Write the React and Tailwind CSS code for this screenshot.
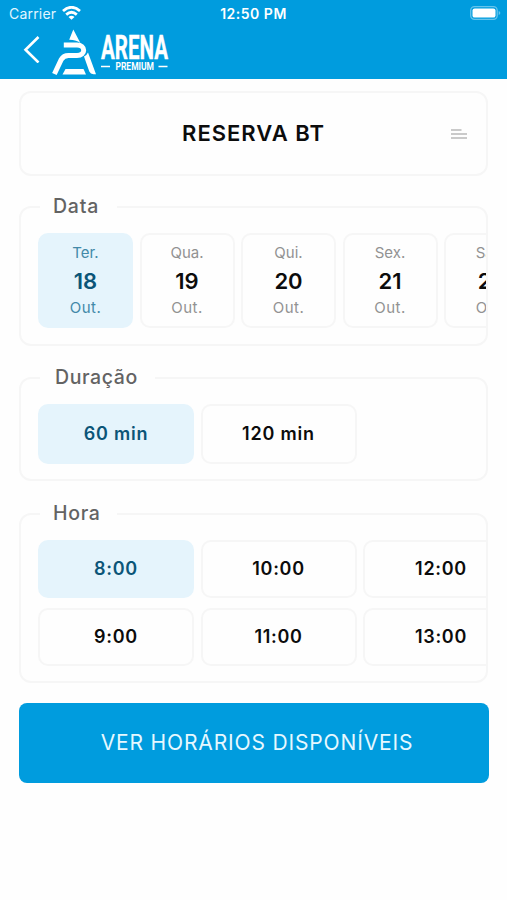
const DAYS = [
  ["Ter.", "18"],
  ["Qua.", "19"],
  ["Qui.", "20"],
  ["Sex.", "21"],
  ["Sáb.", "22"],
];
const HOURS = [
  ["8:00", "9:00"],
  ["10:00", "11:00"],
  ["12:00", "13:00"],
];

function Section({ title, legendClass, className, children }) {
  return (
    <fieldset className={`mx-[19px] min-w-0 rounded-[12px] border-2 border-[#f6f6f6] ${className}`}>
      <legend className={`ml-[19px] h-[22px] text-[19.5px] leading-[20px] font-medium text-[#636363] ${legendClass}`}>
        {title}
      </legend>
      <div className="overflow-hidden pt-[15px] pl-[17px]">{children}</div>
    </fieldset>
  );
}

function Tile({ selected, className, children }) {
  return (
    <div
      className={`flex shrink-0 flex-col items-center justify-center rounded-[10px] border-2 ${
        selected ? "border-[#e5f4fc] bg-[#e5f4fc] text-[#0b5578]" : "border-[#f6f6f6] bg-[#fefefe] text-[#0c0c0c]"
      } ${className}`}
    >
      {children}
    </div>
  );
}

function Logo() {
  return (
    <svg width="120" height="50" viewBox="0 0 120 50" fill="none" className="ml-[11px]">
      <g fill="#fff">
        <path d="M22.3 1.5 L29.5 15.2 Q26 12.2 18.2 11.8 Z" />
        <path d="M33 28.5 Q36 27 37 24.5 L45 46.3 H42.5 Q39.5 46 38.3 43.5 Z" />
        <path d="M14.5 41 H32.5 L35 46.5 H11.5 Z" />
      </g>
      <path d="M12.8 17 H26 C34.8 17 35 27.5 26 27.5 H17.5 Q12.5 27.5 10.3 31.5 L3.4 46" stroke="#fff" strokeWidth="5" />
      <text x="50" y="31" fill="#fff" stroke="#fff" strokeWidth="0.4" fontSize="33" fontWeight="700" textLength="67" lengthAdjust="spacingAndGlyphs" className="font-['Roboto',sans-serif]">
        ARENA
      </text>
      <text x="64.5" y="42.3" fill="#fff" fontSize="10.5" fontWeight="700" textLength="38.5" lengthAdjust="spacingAndGlyphs" className="font-['Roboto',sans-serif]">
        PREMIUM
      </text>
      <path d="M50 38.5 H59 M107.5 38.5 H116.5" stroke="#fff" strokeWidth="1.3" />
    </svg>
  );
}

export default function App() {
  return (
    <div className="h-[900px] w-[507px] overflow-hidden bg-[#fefefe] font-['Inter',sans-serif]">
      <header className="h-[79px] bg-[#009cde] text-white">
        <div className="grid h-[28px] grid-cols-[1fr_auto_1fr] items-center pr-[6px] pl-[9px] text-[14px]">
          <div className="-mt-px flex items-center gap-[6px] text-[#e2f6ff]">
            <span className="tracking-[0.2px]">Carrier</span>
            <svg width="19" height="14" viewBox="0 0 19 14" fill="none" stroke="#fff" strokeWidth="2.8" className="-mt-px">
              <path d="M1 5 Q9.5 -2.4 18 5" />
              <path d="M4.2 8.6 Q9.5 4 14.8 8.6" />
              <path d="M9.5 13.7 L6.5 10.9 Q9.5 8.5 12.5 10.9 Z" fill="#fff" stroke="none" />
            </svg>
          </div>
          <div className="-mt-[2px] mr-[3px] text-center text-[14px] font-semibold tracking-[0.5px] whitespace-nowrap">12:50 PM</div>
          <svg width="31" height="14" viewBox="0 0 31 14" className="-mt-[3px] justify-self-end">
            <rect x="0.7" y="0.7" width="26.5" height="12.6" rx="3.8" fill="none" stroke="#66c4ec" strokeWidth="1.3" />
            <rect x="2.5" y="2.4" width="23" height="9.2" rx="2.2" fill="#fff" />
            <path d="M28.7 5 Q30.3 5.6 30.3 7 Q30.3 8.4 28.7 9 Z" fill="#66c4ec" />
          </svg>
        </div>
        <div className="flex items-start pl-[23px]">
          <svg width="17" height="27" viewBox="0 0 17 27" fill="none" stroke="#fff" strokeWidth="2.6" className="mt-[8px]">
            <path d="M15.5 1 L2.5 13.8 L15.5 26.5" />
          </svg>
          <Logo />
        </div>
      </header>

      <div className="mx-[19px] mt-[12px] grid h-[85px] grid-cols-[1fr_auto_1fr] items-center rounded-[12px] border-2 border-[#f6f6f6]">
        <span />
        <span className="text-[22px] font-semibold tracking-[1px] text-[#0c0c0c]">RESERVA BT</span>
        <svg width="18" height="12" viewBox="0 0 18 12" stroke="#b9b9b9" strokeWidth="1.5" className="mr-[18px] justify-self-end">
          <path d="M1 2 H11.5 M1 6 H17 M1 10 H17" />
        </svg>
      </div>

      <Section title="Data" className="mt-[20px] h-[150px]" legendClass="w-[77px] pl-[13px] tracking-[0.8px]">
        <div className="flex gap-[6.5px]">
          {DAYS.map(([day, n], i) => (
            <Tile key={n} selected={i === 0} className="h-[95px] w-[95px] pb-px">
              <span className={`text-[15px] leading-[20px] ${i === 0 ? "text-[#4289a8]" : "text-[#929292]"}`}>{day}</span>
              <span className="my-[3px] text-[22px] leading-[30px] font-semibold">{n}</span>
              <span className={`-mt-px text-[15px] leading-[20px] tracking-[0.5px] ${i === 0 ? "text-[#4289a8]" : "text-[#929292]"}`}>Out.</span>
            </Tile>
          ))}
        </div>
      </Section>

      <Section title="Duração" className="mt-[21px] h-[114px]" legendClass="w-[115px] pl-[15px] tracking-[0.6px]">
        <div className="flex gap-[6.5px] text-[18px] font-semibold tracking-[0.8px]">
          <Tile selected className="h-[60px] w-[156px] pb-px">60 min</Tile>
          <Tile className="h-[60px] w-[156px] pb-px">120 min</Tile>
        </div>
      </Section>

      <Section title="Hora" className="mt-[22px] h-[180px]" legendClass="w-[77px] pl-[13px] tracking-[0.7px]">
        <div className="flex gap-[6.5px] text-[18px] font-semibold tracking-[0.7px]">
          {HOURS.map((column) => (
            <div key={column[0]} className="flex shrink-0 flex-col gap-[10px]">
              {column.map((hour) => (
                <Tile key={hour} selected={hour === "8:00"} className="h-[58px] w-[156px] pb-px">
                  {hour}
                </Tile>
              ))}
            </div>
          ))}
        </div>
      </Section>

      <button className="mx-[19px] mt-[20px] block h-[80px] w-[470px] rounded-[8px] bg-[#009cde] pl-[6px] text-[21px] tracking-[0.85px] text-[#e6f8ff]">
        VER HORÁRIOS DISPONÍVEIS
      </button>
    </div>
  );
}
